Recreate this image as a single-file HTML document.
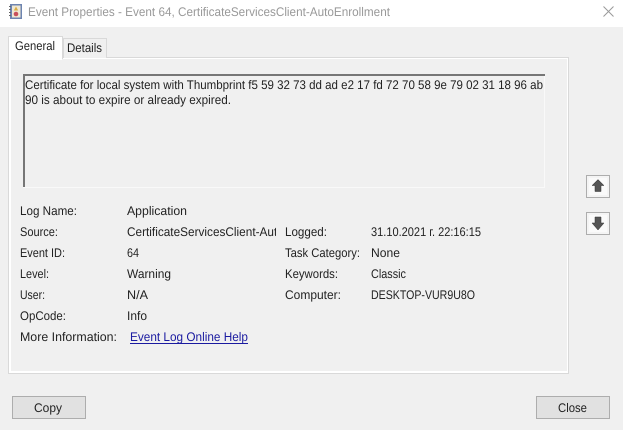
<!DOCTYPE html>
<html><head><meta charset="utf-8"><style>
html,body{margin:0;padding:0;background:#f0f0f0}
svg{display:block}
text{font-family:"Liberation Sans",sans-serif;font-size:12.5px;fill:#222;text-rendering:geometricPrecision}
</style></head><body>
<svg width="623" height="430" viewBox="0 0 623 430" xmlns="http://www.w3.org/2000/svg">
<rect width="623" height="430" fill="#f0f0f0"/>
<rect width="623" height="27" fill="#fff"/>
<!-- title icon -->
<rect x="10" y="4" width="12" height="15" fill="#6d84b0"/>
<rect x="12" y="5.500" width="8.500" height="12" fill="#efe8d4"/>
<path d="M9 6.500h2M9 9.500h2M9 12.500h2M9 15.500h2" stroke="#666" stroke-width="1"/>
<path d="M16 6.500l2.200 4h-4.400z" fill="#d9ad45"/>
<circle cx="16" cy="14" r="2.300" fill="#c8505a"/>
<text x="28" y="16" textLength="362" lengthAdjust="spacingAndGlyphs" style="fill:#999">Event Properties - Event 64, CertificateServicesClient-AutoEnrollment</text>
<path d="M603.500 6.500l10 10M613.500 6.500l-10 10" stroke="#999" stroke-width="1" fill="none"/>
<!-- panel -->
<rect x="8.500" y="57.500" width="560" height="316" fill="#fff" stroke="#d9d9d9"/>
<rect x="11" y="59" width="556" height="312" fill="#f0f0f0"/>
<!-- tabs -->
<path d="M63.500 58V38.500H106.500V58" fill="#f0f0f0" stroke="#d9d9d9"/>
<path d="M8.500 59V36.500H62.500V59" fill="#fff" stroke="#d9d9d9"/>
<rect x="9" y="37" width="53" height="23" fill="#fff"/>
<text x="15" y="50" textLength="40" lengthAdjust="spacingAndGlyphs">General</text>
<text x="67" y="52" textLength="35" lengthAdjust="spacingAndGlyphs">Details</text>
<!-- message box -->
<rect x="23" y="74" width="522" height="114" fill="#f9f9f9"/>
<rect x="25" y="76" width="519" height="111" fill="#f0f0f0"/>
<path d="M23 75H545M24 74V187" stroke="#767676" stroke-width="2" fill="none"/>
<text x="25" y="89" textLength="518" lengthAdjust="spacingAndGlyphs">Certificate for local system with Thumbprint f5 59 32 73 dd ad e2 17 fd 72 70 58 9e 79 02 31 18 96 ab</text>
<text x="25" y="104" textLength="206" lengthAdjust="spacingAndGlyphs">90 is about to expire or already expired.</text>
<!-- labels -->
<text x="20" y="215" textLength="57" lengthAdjust="spacingAndGlyphs">Log Name:</text>
<text x="20" y="236" textLength="38" lengthAdjust="spacingAndGlyphs">Source:</text>
<text x="20" y="257" textLength="45" lengthAdjust="spacingAndGlyphs">Event ID:</text>
<text x="20" y="278" textLength="29" lengthAdjust="spacingAndGlyphs">Level:</text>
<text x="20" y="299" textLength="25" lengthAdjust="spacingAndGlyphs">User:</text>
<text x="20" y="320" textLength="46" lengthAdjust="spacingAndGlyphs">OpCode:</text>
<text x="20" y="341" textLength="97" lengthAdjust="spacingAndGlyphs">More Information:</text>
<text x="127" y="215" textLength="60" lengthAdjust="spacingAndGlyphs">Application</text>
<svg x="127" y="220" width="149" height="22"><text x="0" y="16" textLength="187" lengthAdjust="spacingAndGlyphs">CertificateServicesClient-AutoEnroll</text></svg>
<text x="127" y="257" textLength="12" lengthAdjust="spacingAndGlyphs">64</text>
<text x="127" y="278" textLength="44" lengthAdjust="spacingAndGlyphs">Warning</text>
<text x="127" y="299" textLength="21" lengthAdjust="spacingAndGlyphs">N/A</text>
<text x="127" y="320" textLength="20" lengthAdjust="spacingAndGlyphs">Info</text>
<text x="130" y="341" textLength="118" lengthAdjust="spacingAndGlyphs" style="fill:#1a1aa0">Event Log Online Help</text>
<path d="M130 343.500H248" stroke="#1a1aa0" stroke-width="1"/>
<text x="285" y="236" textLength="42" lengthAdjust="spacingAndGlyphs">Logged:</text>
<text x="285" y="257" textLength="75" lengthAdjust="spacingAndGlyphs">Task Category:</text>
<text x="285" y="278" textLength="53" lengthAdjust="spacingAndGlyphs">Keywords:</text>
<text x="285" y="299" textLength="56" lengthAdjust="spacingAndGlyphs">Computer:</text>
<text x="371" y="236" textLength="110" lengthAdjust="spacingAndGlyphs">31.10.2021 г. 22:16:15</text>
<text x="371" y="257" textLength="29" lengthAdjust="spacingAndGlyphs">None</text>
<text x="371" y="278" textLength="35" lengthAdjust="spacingAndGlyphs">Classic</text>
<text x="371" y="299" textLength="104" lengthAdjust="spacingAndGlyphs">DESKTOP-VUR9U8O</text>
<!-- nav buttons -->
<rect x="586.500" y="175.500" width="23" height="22" fill="#f4f4f4" stroke="#adadad"/>
<rect x="589" y="178" width="18" height="17" fill="#fafafa"/>
<path d="M598 179.500l6 6h-3v6h-6v-6h-3z" fill="#555" stroke="#333" stroke-width=".5"/>
<rect x="586.500" y="212.500" width="23" height="22" fill="#f4f4f4" stroke="#adadad"/>
<rect x="589" y="215" width="18" height="17" fill="#fafafa"/>
<path d="M595 217h6v6h3l-6 7-6-7h3z" fill="#555" stroke="#333" stroke-width=".5"/>
<!-- bottom buttons -->
<rect x="12.500" y="396.500" width="73" height="22" fill="#e1e1e1" stroke="#adadad"/>
<text x="34" y="412" textLength="28" lengthAdjust="spacingAndGlyphs">Copy</text>
<rect x="536.500" y="396.500" width="73" height="22" fill="#e1e1e1" stroke="#adadad"/>
<text x="558" y="412" textLength="29" lengthAdjust="spacingAndGlyphs">Close</text>
</svg>
</body></html>
